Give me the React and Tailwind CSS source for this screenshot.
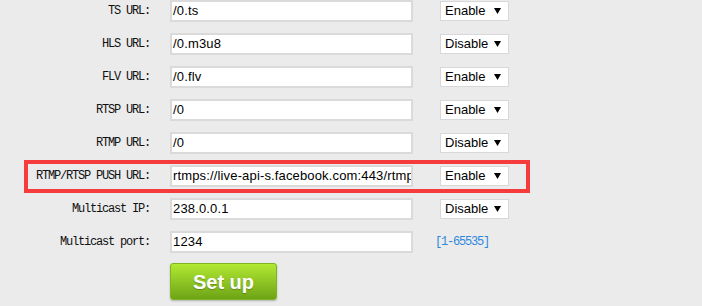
import React from "react";

const rows = [
  { label: "TS URL:", value: "/0.ts", sel: "Enable" },
  { label: "HLS URL:", value: "/0.m3u8", sel: "Disable" },
  { label: "FLV URL:", value: "/0.flv", sel: "Enable" },
  { label: "RTSP URL:", value: "/0", sel: "Enable" },
  { label: "RTMP URL:", value: "/0", sel: "Disable" },
  { label: "RTMP/RTSP PUSH URL:", value: "rtmps://live-api-s.facebook.com:443/rtmp/", sel: "Enable", mark: true },
  { label: "Multicast IP:", value: "238.0.0.1", sel: "Disable" },
  { label: "Multicast port:", value: "1234", hint: "[1-65535]" },
];

const mono = { fontFamily: '"Liberation Mono", "DejaVu Sans Mono", monospace' };

function Row({ r }) {
  return (
    <div className="relative flex h-[33px] items-center">
      {r.mark && (
        <div className="absolute left-[24px] top-[1px] h-[33px] w-[506px] border-[4px] border-[#f53b3b]" />
      )}
      <div
        className="w-[150px] shrink-0 text-right text-[12px] tracking-[-1.2px] text-[#111]"
        style={mono}
      >
        {r.label}
      </div>
      <div className="ml-[20px] flex h-[22px] w-[243px] shrink-0 items-center overflow-hidden whitespace-nowrap border-2 border-[#dadada] bg-white pl-[1px] font-['Liberation_Sans',Arial,sans-serif] text-[13px] tracking-[0.15px] text-black">
        {r.value}
      </div>
      <div className="ml-[22px] flex items-center">
        {r.sel ? (
          <div className="ml-[5px] flex h-[20px] w-[69px] items-center justify-between border border-[#d8d8d8] bg-white pl-[4px] pr-[7px] font-['Liberation_Sans',Arial,sans-serif] text-[13px] text-black">
            <span>{r.sel}</span>
            <svg width="7" height="6" viewBox="0 0 7 6">
              <path d="M0 0 H7 L3.5 6 Z" fill="#000" />
            </svg>
          </div>
        ) : (
          <span className="text-[12px] tracking-[-1.2px] text-[#2e88e0]" style={mono}>
            {r.hint}
          </span>
        )}
      </div>
    </div>
  );
}

export default function App() {
  return (
    <div className="h-[306px] w-[702px] overflow-hidden bg-[#ebebeb]">
      <div className="mt-[-6px]">
        {rows.map((r) => (
          <Row key={r.label} r={r} />
        ))}
      </div>
      <div className="ml-[170px] mt-[5px]">
        <button className="flex h-[37px] w-[107px] items-center justify-center rounded-[3px] border border-[#7cb51f] bg-gradient-to-b from-[#b2e932] to-[#6ea416] font-['Liberation_Sans',Arial,sans-serif] text-[20px] font-bold text-white shadow-[0_1px_2px_rgba(0,0,0,0.25)] [text-shadow:0_1px_1px_rgba(0,0,0,0.25)]">
          Set up
        </button>
      </div>
    </div>
  );
}
